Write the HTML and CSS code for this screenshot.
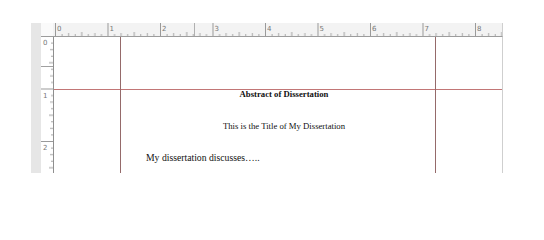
FILE: index.html
```html
<!DOCTYPE html>
<html>
<head>
<meta charset="utf-8">
<link rel="stylesheet" href="styles.css">
</head>
<body>
<div class="app">
  <div class="strip"></div>
  <div class="corner"></div>
  <div class="hruler">
    <svg width="448" height="13" viewBox="0 0 448 13">
      <defs>
        <pattern id="ht" x="1" y="0" width="52.5" height="13" patternUnits="userSpaceOnUse">
          <rect x="0" y="0" width="1" height="13" fill="#9a9a9a"/>
          <rect x="6.56" y="11" width="1" height="2" fill="#a8a8a8"/>
          <rect x="13.13" y="10" width="1" height="3" fill="#a8a8a8"/>
          <rect x="19.69" y="11" width="1" height="2" fill="#a8a8a8"/>
          <rect x="26.25" y="9" width="1" height="4" fill="#a0a0a0"/>
          <rect x="32.81" y="11" width="1" height="2" fill="#a8a8a8"/>
          <rect x="39.38" y="10" width="1" height="3" fill="#a8a8a8"/>
          <rect x="45.94" y="11" width="1" height="2" fill="#a8a8a8"/>
        </pattern>
      </defs>
      <rect x="0" y="0" width="448" height="13" fill="url(#ht)"/>
      <rect x="140" y="0" width="1" height="13" fill="#b0b0b0"/>
      <g class="rlabel">
        <text x="3" y="8">0</text>
        <text x="55.5" y="8">1</text>
        <text x="108" y="8">2</text>
        <text x="160.5" y="8">3</text>
        <text x="213" y="8">4</text>
        <text x="265.5" y="8">5</text>
        <text x="318" y="8">6</text>
        <text x="370.5" y="8">7</text>
        <text x="423" y="8">8</text>
      </g>
    </svg>
  </div>
  <div class="vruler">
    <svg width="12" height="136" viewBox="0 0 12 136">
      <defs>
        <pattern id="vt" x="0" y="-1" width="12" height="52.5" patternUnits="userSpaceOnUse">
          <rect x="0" y="0" width="12" height="1" fill="#9a9a9a"/>
          <rect x="10" y="6.56" width="2" height="1" fill="#a8a8a8"/>
          <rect x="9" y="13.13" width="3" height="1" fill="#a8a8a8"/>
          <rect x="10" y="19.69" width="2" height="1" fill="#a8a8a8"/>
          <rect x="8" y="26.25" width="4" height="1" fill="#a0a0a0"/>
          <rect x="10" y="32.81" width="2" height="1" fill="#a8a8a8"/>
          <rect x="9" y="39.38" width="3" height="1" fill="#a8a8a8"/>
          <rect x="10" y="45.94" width="2" height="1" fill="#a8a8a8"/>
        </pattern>
      </defs>
      <rect x="0" y="0" width="12" height="136" fill="url(#vt)"/>
      <rect x="0" y="29" width="12" height="1" fill="#a0a0a0"/>
      <g class="rlabel">
        <text x="2" y="8">0</text>
        <text x="2" y="60.5">1</text>
        <text x="2" y="113">2</text>
      </g>
    </svg>
  </div>
  <div class="page">
    <div class="guide guide-top"></div>
    <div class="guide guide-left"></div>
    <div class="guide guide-right"></div>
    <div class="doc">
      <p class="abstract">Abstract of Dissertation</p>
      <p class="title">This is the Title of My Dissertation</p>
      <p class="body-text">My dissertation discusses…..</p>
    </div>
  </div>
</div>
</body>
</html>
```

FILE: styles.css
```css
html, body {
  margin: 0;
  padding: 0;
  background: #ffffff;
}

.app {
  display: grid;
  grid-template-columns: 10px 12px 450px;
  grid-template-rows: 14px 136px;
  margin: 23px 0 0 31px;
  width: 472px;
}

.strip {
  grid-row: 1 / 3;
  grid-column: 1;
  background: #e6e6e6;
}

.corner {
  grid-row: 1;
  grid-column: 2;
  background: #fafafa;
  border-bottom: 1px solid #9c9c9c;
}

.hruler {
  grid-row: 1;
  grid-column: 3;
  box-sizing: border-box;
  background: #f3f3f3;
  border-bottom: 1px solid #9c9c9c;
  border-right: 1px solid #cfcfcf;
  padding-left: 1px;
  overflow: hidden;
}

.hruler svg,
.vruler svg {
  display: block;
}

.vruler {
  grid-row: 2;
  grid-column: 2;
  background: #ffffff;
  overflow: hidden;
}

.rlabel text {
  font-family: "DejaVu Sans", "Liberation Sans", sans-serif;
  font-size: 7px;
  fill: #777777;
}

.page {
  grid-row: 2;
  grid-column: 3;
  position: relative;
  box-sizing: border-box;
  background: #ffffff;
  border-left: 1px solid #8f8f8f;
  border-right: 1px solid #cfcfcf;
  overflow: hidden;
}

.guide {
  position: absolute;
}

.guide-top {
  top: 52px;
  left: 0;
  right: 0;
  height: 1px;
  background: #c27676;
}

.guide-left,
.guide-right {
  top: 0;
  bottom: 0;
  width: 1px;
  background: #956a6a;
}

.guide-left {
  left: 66px;
}

.guide-right {
  left: 381px;
}

.doc {
  margin-left: 67px;
  width: 314px;
  box-sizing: border-box;
  padding: 51px 0 0 12px;
  font-family: "Liberation Serif", "Times New Roman", serif;
  color: #111111;
}

.doc p {
  margin: 0;
}

.abstract {
  font-size: 8.7px;
  font-weight: bold;
  line-height: 12px;
  text-align: center;
}

.title {
  margin-top: 20px !important;
  font-size: 8.7px;
  line-height: 12px;
  text-align: center;
}

.body-text {
  margin-top: 19px !important;
  padding-left: 13px;
  font-size: 9.7px;
  line-height: 14px;
  text-align: left;
}
```
